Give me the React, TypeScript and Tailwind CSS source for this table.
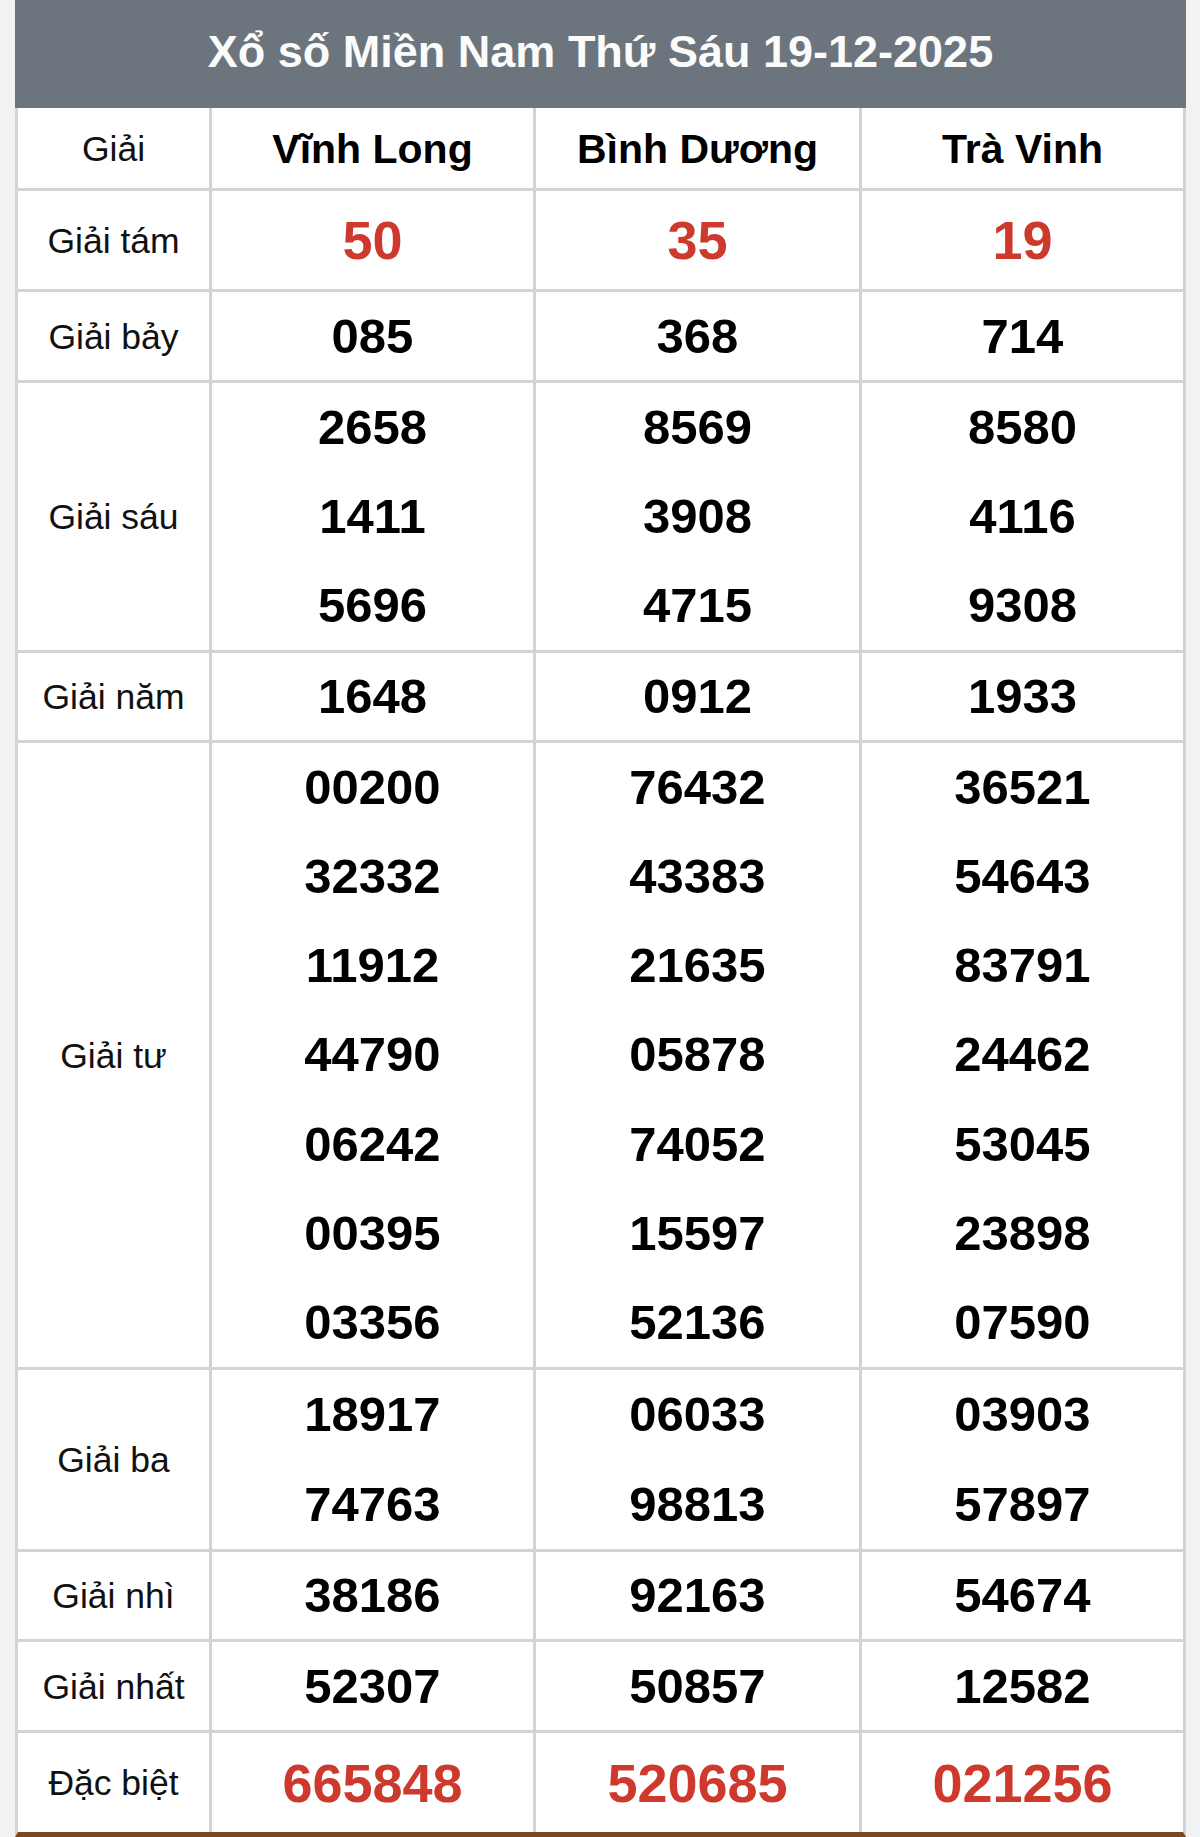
const FONT = { fontFamily: '"Liberation Sans", Arial, Helvetica, sans-serif' };

type Row = {
  label: string;
  height: string;
  values: string[][];
  red?: boolean;
  big?: boolean;
  last?: boolean;
};

const rows: Row[] = [
  { label: "Giải tám", height: "h-[101px]", values: [["50"], ["35"], ["19"]], red: true, big: true },
  { label: "Giải bảy", height: "h-[91px]", values: [["085"], ["368"], ["714"]] },
  {
    label: "Giải sáu",
    height: "h-[270px]",
    values: [
      ["2658", "1411", "5696"],
      ["8569", "3908", "4715"],
      ["8580", "4116", "9308"],
    ],
  },
  { label: "Giải năm", height: "h-[90px]", values: [["1648"], ["0912"], ["1933"]] },
  {
    label: "Giải tư",
    height: "h-[627px]",
    values: [
      ["00200", "32332", "11912", "44790", "06242", "00395", "03356"],
      ["76432", "43383", "21635", "05878", "74052", "15597", "52136"],
      ["36521", "54643", "83791", "24462", "53045", "23898", "07590"],
    ],
  },
  {
    label: "Giải ba",
    height: "h-[182px]",
    values: [
      ["18917", "74763"],
      ["06033", "98813"],
      ["03903", "57897"],
    ],
  },
  { label: "Giải nhì", height: "h-[90px]", values: [["38186"], ["92163"], ["54674"]] },
  { label: "Giải nhất", height: "h-[91px]", values: [["52307"], ["50857"], ["12582"]] },
  {
    label: "Đặc biệt",
    height: "h-[99px]",
    values: [["665848"], ["520685"], ["021256"]],
    red: true,
    big: true,
    last: true,
  },
];

const stations = ["Vĩnh Long", "Bình Dương", "Trà Vinh"];

function ResultRow({ row }: { row: Row }) {
  const numberClass = row.big
    ? "text-[54px] text-[#cd3a2d]"
    : "text-[49px] text-black";

  return (
    <div
      className={`grid grid-cols-[194px_324px_326px_1fr] ${row.height} ${
        row.last ? "" : "border-b-[3px] border-[#d3d3d3]"
      }`}
    >
      <div className="flex items-center justify-center border-r-[3px] border-[#d3d3d3] pt-[3px] text-[35.5px] text-[#111]">
        {row.label}
      </div>
      {row.values.map((col, i) => (
        <div
          key={i}
          className={`flex flex-col ${i < 2 ? "border-r-[3px] border-[#d3d3d3]" : ""}`}
        >
          {col.map((n) => (
            <div
              key={n}
              className={`flex flex-1 items-center justify-center font-bold leading-none ${numberClass}`}
            >
              {n}
            </div>
          ))}
        </div>
      ))}
    </div>
  );
}

export default function App() {
  return (
    <div className="min-h-[1837px] bg-[#f2f2f2]" style={FONT}>
      <div className="ml-[15px] w-[1171px] bg-white">
        <div className="flex h-[108px] items-center justify-center bg-[#6c757d] pb-[5px] text-[45px] font-bold text-[#fbfbfb]">
          Xổ số Miền Nam Thứ Sáu 19-12-2025
        </div>
        <div className="border-x-[3px] border-b-[5px] border-x-[#d3d3d3] border-b-[#7a4a22]">
          <div className="grid h-[83px] grid-cols-[194px_324px_326px_1fr] border-b-[3px] border-[#d3d3d3]">
            <div className="flex items-center justify-center border-r-[3px] border-[#d3d3d3] pt-[3px] text-[35.5px] text-[#111]">
              Giải
            </div>
            {stations.map((s, i) => (
              <div
                key={s}
                className={`flex items-center justify-center pt-[3px] text-[41px] font-bold text-black ${
                  i < 2 ? "border-r-[3px] border-[#d3d3d3]" : ""
                }`}
              >
                {s}
              </div>
            ))}
          </div>
          {rows.map((row) => (
            <ResultRow key={row.label} row={row} />
          ))}
        </div>
      </div>
    </div>
  );
}
